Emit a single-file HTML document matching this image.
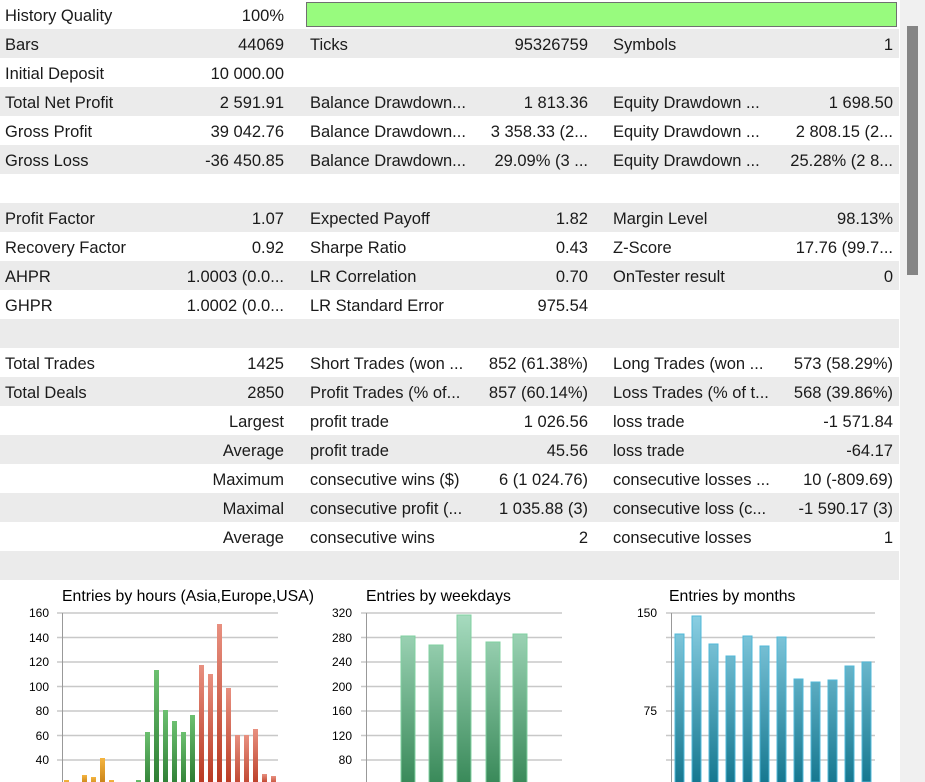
<!DOCTYPE html>
<html><head><meta charset="utf-8"><style>
body{margin:0;width:925px;height:782px;overflow:hidden;background:#fff;font-family:"Liberation Sans",Arial,sans-serif;color:#1a1a1a;position:relative}
.r{position:absolute;left:0;width:899px;height:29px;font-size:16.5px;line-height:33px}
.g{background:#ebebeb}
.r span{position:absolute;white-space:nowrap}
.a{left:5px}.b{right:615px}.c{left:310px}.d{right:311px}.e{left:613px}.f{right:6px}
#sb{position:absolute;left:900px;top:0;width:25px;height:782px;background:#f0f0f0}
#th{position:absolute;left:907px;top:26px;width:11px;height:249px;background:#858585}
</style></head><body>
<div class="r" style="top:0"><span class="a">History Quality</span><span class="b">100%</span><div style="position:absolute;left:306px;top:2px;width:589px;height:23px;background:#98fb7e;border:1px solid #707070"></div></div>
<div class="r g" style="top:29px"><span class="a">Bars</span><span class="b">44069</span><span class="c">Ticks</span><span class="d">95326759</span><span class="e">Symbols</span><span class="f">1</span></div>
<div class="r" style="top:58px"><span class="a">Initial Deposit</span><span class="b">10 000.00</span></div>
<div class="r g" style="top:87px"><span class="a">Total Net Profit</span><span class="b">2 591.91</span><span class="c">Balance Drawdown...</span><span class="d">1 813.36</span><span class="e">Equity Drawdown ...</span><span class="f">1 698.50</span></div>
<div class="r" style="top:116px"><span class="a">Gross Profit</span><span class="b">39 042.76</span><span class="c">Balance Drawdown...</span><span class="d">3 358.33 (2...</span><span class="e">Equity Drawdown ...</span><span class="f">2 808.15 (2...</span></div>
<div class="r g" style="top:145px"><span class="a">Gross Loss</span><span class="b">-36 450.85</span><span class="c">Balance Drawdown...</span><span class="d">29.09% (3 ...</span><span class="e">Equity Drawdown ...</span><span class="f">25.28% (2 8...</span></div>
<div class="r" style="top:174px"></div>
<div class="r g" style="top:203px"><span class="a">Profit Factor</span><span class="b">1.07</span><span class="c">Expected Payoff</span><span class="d">1.82</span><span class="e">Margin Level</span><span class="f">98.13%</span></div>
<div class="r" style="top:232px"><span class="a">Recovery Factor</span><span class="b">0.92</span><span class="c">Sharpe Ratio</span><span class="d">0.43</span><span class="e">Z-Score</span><span class="f">17.76 (99.7...</span></div>
<div class="r g" style="top:261px"><span class="a">AHPR</span><span class="b">1.0003 (0.0...</span><span class="c">LR Correlation</span><span class="d">0.70</span><span class="e">OnTester result</span><span class="f">0</span></div>
<div class="r" style="top:290px"><span class="a">GHPR</span><span class="b">1.0002 (0.0...</span><span class="c">LR Standard Error</span><span class="d">975.54</span></div>
<div class="r g" style="top:319px"></div>
<div class="r" style="top:348px"><span class="a">Total Trades</span><span class="b">1425</span><span class="c">Short Trades (won ...</span><span class="d">852 (61.38%)</span><span class="e">Long Trades (won ...</span><span class="f">573 (58.29%)</span></div>
<div class="r g" style="top:377px"><span class="a">Total Deals</span><span class="b">2850</span><span class="c">Profit Trades (% of...</span><span class="d">857 (60.14%)</span><span class="e">Loss Trades (% of t...</span><span class="f">568 (39.86%)</span></div>
<div class="r" style="top:406px"><span class="b">Largest</span><span class="c">profit trade</span><span class="d">1 026.56</span><span class="e">loss trade</span><span class="f">-1 571.84</span></div>
<div class="r g" style="top:435px"><span class="b">Average</span><span class="c">profit trade</span><span class="d">45.56</span><span class="e">loss trade</span><span class="f">-64.17</span></div>
<div class="r" style="top:464px"><span class="b">Maximum</span><span class="c">consecutive wins ($)</span><span class="d">6 (1 024.76)</span><span class="e">consecutive losses ...</span><span class="f">10 (-809.69)</span></div>
<div class="r g" style="top:493px"><span class="b">Maximal</span><span class="c">consecutive profit (...</span><span class="d">1 035.88 (3)</span><span class="e">consecutive loss (c...</span><span class="f">-1 590.17 (3)</span></div>
<div class="r" style="top:522px"><span class="b">Average</span><span class="c">consecutive wins</span><span class="d">2</span><span class="e">consecutive losses</span><span class="f">1</span></div>
<div class="r g" style="top:551px"></div>
<svg style="position:absolute;left:0;top:0" width="900" height="782" font-family="Liberation Sans,Arial,sans-serif">
<defs>
<linearGradient id="go" x1="0" y1="0" x2="0" y2="1"><stop offset="0" stop-color="#f5b540"/><stop offset="1" stop-color="#c07810"/></linearGradient>
<linearGradient id="gg" x1="0" y1="0" x2="0" y2="1"><stop offset="0" stop-color="#6cc070"/><stop offset="1" stop-color="#2a7a30"/></linearGradient>
<linearGradient id="gr" x1="0" y1="0" x2="0" y2="1"><stop offset="0" stop-color="#e89080"/><stop offset="1" stop-color="#b83820"/></linearGradient>
<linearGradient id="gw" x1="0" y1="613" x2="0" y2="782" gradientUnits="userSpaceOnUse"><stop offset="0" stop-color="#a8dcc0"/><stop offset="1" stop-color="#3a8a5a"/></linearGradient>
<linearGradient id="gm" x1="0" y1="613" x2="0" y2="782" gradientUnits="userSpaceOnUse"><stop offset="0" stop-color="#8cd0e4"/><stop offset="1" stop-color="#167890"/></linearGradient>
</defs>
<g font-size="15.8" fill="#000">
<text x="62" y="601">Entries by hours (Asia,Europe,USA)</text>
<text x="366" y="601">Entries by weekdays</text>
<text x="669" y="601">Entries by months</text>
</g>
<g stroke="#c8c8c8" stroke-width="1.5">
<path d="M57 613H278M57 637.5H278M57 662H278M57 686.5H278M57 711H278M57 735.5H278M57 760H278M57 784.5H278"/>
<path d="M361 613H562M361 637.5H562M361 662H562M361 686.5H562M361 711H562M361 735.5H562M361 760H562M361 784.5H562"/>
<path d="M666 613H875M666 637.5H875M666 662H875M666 686.5H875M666 711H875M666 735.5H875M666 760H875M666 784.5H875"/>
</g>
<g stroke="#999"><path d="M62.5 613V782M366.5 613V782M671.5 613V782"/></g>
<g font-size="12" fill="#000" text-anchor="end">
<text x="49" y="617">160</text><text x="49" y="642">140</text><text x="49" y="666">120</text><text x="49" y="691">100</text><text x="49" y="715">80</text><text x="49" y="740">60</text><text x="49" y="764">40</text>
<text x="352" y="617">320</text><text x="352" y="642">280</text><text x="352" y="666">240</text><text x="352" y="691">200</text><text x="352" y="715">160</text><text x="352" y="740">120</text><text x="352" y="764">80</text>
<text x="657" y="617">150</text><text x="657" y="715">75</text>
</g>
<g fill="url(#go)">
<rect x="64" y="780" width="5" height="10"/><rect x="82" y="775" width="5" height="10"/><rect x="91" y="777" width="5" height="10"/><rect x="100" y="758" width="5" height="30"/><rect x="109" y="780" width="5" height="10"/>
</g>
<g fill="url(#gg)">
<rect x="136" y="780" width="5" height="10"/><rect x="145" y="732" width="5" height="60"/><rect x="154" y="670" width="5" height="120"/><rect x="163" y="710" width="5" height="80"/><rect x="172" y="721" width="5" height="70"/><rect x="181" y="732" width="5" height="60"/><rect x="190" y="715" width="5" height="70"/>
</g>
<g fill="url(#gr)">
<rect x="199" y="665" width="5" height="120"/><rect x="208" y="674" width="5" height="110"/><rect x="217" y="624" width="5" height="160"/><rect x="226" y="688" width="5" height="100"/><rect x="235" y="735" width="5" height="60"/><rect x="244" y="735" width="5" height="60"/><rect x="253" y="729" width="5" height="60"/><rect x="262" y="774" width="5" height="10"/><rect x="271" y="776" width="5" height="10"/>
</g>
<g fill="url(#gw)" stroke="#80d0a0" stroke-width="1">
<rect x="401" y="636" width="14" height="150"/><rect x="429" y="645" width="14" height="150"/><rect x="457" y="615" width="14" height="170"/><rect x="486" y="642" width="14" height="150"/><rect x="513" y="634" width="14" height="150"/>
</g>
<g fill="url(#gm)" stroke="#50b8d8" stroke-width="1">
<rect x="675" y="634" width="9" height="150"/><rect x="692" y="616" width="9" height="170"/><rect x="709" y="644" width="9" height="140"/><rect x="726" y="656" width="9" height="130"/><rect x="743" y="636" width="9" height="150"/><rect x="760" y="646" width="9" height="140"/><rect x="777" y="637" width="9" height="150"/><rect x="794" y="679" width="9" height="110"/><rect x="811" y="682" width="9" height="100"/><rect x="828" y="680" width="9" height="110"/><rect x="845" y="666" width="9" height="120"/><rect x="862" y="662" width="9" height="120"/>
</g>
</svg>
<div id="sb"></div><div id="th"></div>
</body></html>
